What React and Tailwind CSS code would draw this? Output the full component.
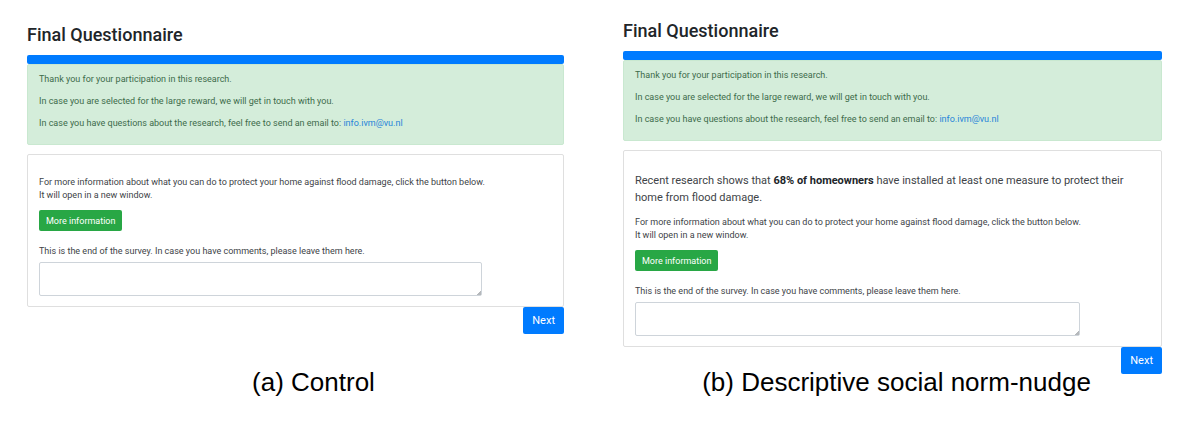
function Panel({ id, nudge, className }) {
  return (
    <section className={`min-w-0 ${className}`}>
      <h2 className="text-[18px] leading-6 font-medium text-[#212529]">Final Questionnaire</h2>
      <div role="progressbar" aria-label="Survey progress" className="mt-2 h-[9px] rounded-[2px] bg-[#007bff]" />
      <div className="flex flex-col gap-[9px] rounded-[2px] border border-[#c9e8d0] bg-[#d4edda] px-[11px] pt-2 pb-[14px] text-[9px] leading-[13px] text-[#3d6b4a]">
        <p>Thank you for your participation in this research.</p>
        <p>In case you are selected for the large reward, we will get in touch with you.</p>
        <p>
          In case you have questions about the research, feel free to send an email to:{" "}
          <a href="mailto:info.ivm@vu.nl" className="text-[#2683d9]">info.ivm@vu.nl</a>
        </p>
      </div>
      <form onSubmit={(e) => e.preventDefault()}>
        <div className="mt-[9px] rounded-[2px] border border-[#dfdfdf] px-[11px] pt-[21px] pb-[10px] text-[9px] leading-[13px] text-[#404347]">
          {nudge && (
            <p className="mb-[10px] text-[11px] leading-[17px]">
              Recent research shows that <b className="text-[#212529]">68% of homeowners</b> have installed at least one measure to protect their home from flood damage.
            </p>
          )}
          <p>
            For more information about what you can do to protect your home against flood damage, click the button below.
            <br />
            It will open in a new window.
          </p>
          <button type="button" className="mt-2 block h-[21px] rounded-[2px] bg-[#28a745] px-[7px] pt-[2px] text-white">More information</button>
          <label htmlFor={id} className="mt-[14px] block">This is the end of the survey. In case you have comments, please leave them here.</label>
          <textarea
            id={id}
            className="mt-1 block h-[34px] w-[calc(100%-70px)] rounded-[2px] border border-[#ced4da] bg-white p-1 [&::-webkit-resizer]:bg-[linear-gradient(135deg,transparent_84%,#b5b8bb_84%)]"
          />
        </div>
        <button type="submit" className="ml-auto block h-[27px] rounded-[2px] bg-[#007bff] px-[9px] pt-[2px] text-[11px] text-white">Next</button>
      </form>
    </section>
  );
}

export default function App() {
  return (
    <main className="grid grid-cols-[537fr_539fr] gap-x-[59px] bg-white pt-[19px] pr-[38px] pb-10 pl-[27px] font-['Roboto',sans-serif]">
      <Panel id="comments-a" className="pt-1" />
      <Panel id="comments-b" nudge className="" />
      <p className="pl-9 text-center font-['Liberation_Sans',sans-serif] text-[26px] leading-4 text-black">(a) Control</p>
      <p className="pl-2 text-center font-['Liberation_Sans',sans-serif] text-[26px] leading-4 text-black">(b) Descriptive social norm-nudge</p>
    </main>
  );
}
